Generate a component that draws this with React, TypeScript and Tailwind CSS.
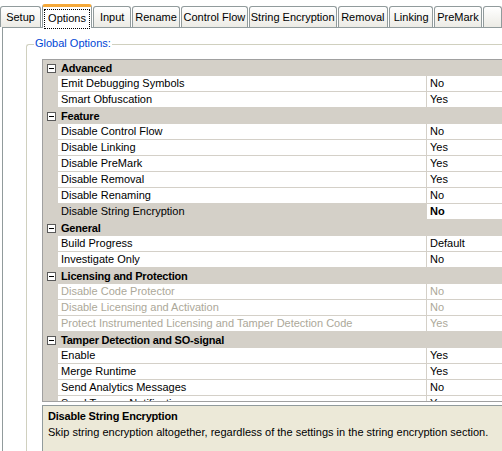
import React from 'react';

type Row =
  | { kind: 'cat'; label: string }
  | { kind: 'item'; label: string; value: string; disabled?: boolean; selected?: boolean };

const rows: Row[] = [
  { kind: 'cat', label: 'Advanced' },
  { kind: 'item', label: 'Emit Debugging Symbols', value: 'No' },
  { kind: 'item', label: 'Smart Obfuscation', value: 'Yes' },
  { kind: 'cat', label: 'Feature' },
  { kind: 'item', label: 'Disable Control Flow', value: 'No' },
  { kind: 'item', label: 'Disable Linking', value: 'Yes' },
  { kind: 'item', label: 'Disable PreMark', value: 'Yes' },
  { kind: 'item', label: 'Disable Removal', value: 'Yes' },
  { kind: 'item', label: 'Disable Renaming', value: 'No' },
  { kind: 'item', label: 'Disable String Encryption', value: 'No', selected: true },
  { kind: 'cat', label: 'General' },
  { kind: 'item', label: 'Build Progress', value: 'Default' },
  { kind: 'item', label: 'Investigate Only', value: 'No' },
  { kind: 'cat', label: 'Licensing and Protection' },
  { kind: 'item', label: 'Disable Code Protector', value: 'No', disabled: true },
  { kind: 'item', label: 'Disable Licensing and Activation', value: 'No', disabled: true },
  { kind: 'item', label: 'Protect Instrumented Licensing and Tamper Detection Code', value: 'Yes', disabled: true },
  { kind: 'cat', label: 'Tamper Detection and SO-signal' },
  { kind: 'item', label: 'Enable', value: 'Yes' },
  { kind: 'item', label: 'Merge Runtime', value: 'Yes' },
  { kind: 'item', label: 'Send Analytics Messages', value: 'No' },
  { kind: 'item', label: 'Send Tamper Notification', value: 'Yes' },
];

const tabs = [
  { label: 'Setup', w: 'w-[43px]' },
  { label: 'Options', w: 'w-[51px]', active: true },
  { label: 'Input', w: 'w-[40px]' },
  { label: 'Rename', w: 'w-[50px]' },
  { label: 'Control Flow', w: 'w-[70px]' },
  { label: 'String Encryption', w: 'w-[92px]' },
  { label: 'Removal', w: 'w-[53px]' },
  { label: 'Linking', w: 'w-[46px]' },
  { label: 'PreMark', w: 'w-[50px]' },
  { label: '', w: 'w-[20px]' },
];

function MinusBox() {
  return (
    <div className="w-[9px] h-[9px] border border-[#5a5a5a] bg-white flex items-center justify-center">
      <div className="w-[5px] h-px bg-black" />
    </div>
  );
}

export default function App() {
  return (
    <div
      className="w-[502px] h-[451px] overflow-hidden bg-white flex flex-col text-[11px] leading-none text-black"
      style={{ fontFamily: '"Liberation Sans", Arial, sans-serif' }}
    >
      {/* Tabs */}
      <div className="h-[27px] flex items-end gap-[1px] shrink-0 bg-white">
        {tabs.map((t) =>
          t.active ? (
            <div
              key={t.label}
              className={`${t.w} h-[24px] -mb-px relative z-10 bg-white border-x border-[#919b9c] rounded-t-[3px] border-t-[3px] border-t-[#f5a93a] flex items-start justify-center pt-[2px]`}
            >
              <span className="border border-dotted border-black px-[3px] pt-[3px] pb-[4px] mx-[1px] w-full text-center">
                {t.label}
              </span>
            </div>
          ) : (
            <div
              key={t.label || 'rest'}
              className={`${t.w} h-[21px] bg-gradient-to-b from-white to-[#ecebe5] border border-b-0 border-[#919b9c] rounded-t-[3px] flex items-center justify-center pt-[1px]`}
            >
              {t.label}
            </div>
          )
        )}
      </div>

      {/* Tab panel */}
      <div className="flex-1 ml-[2px] border-l border-t border-[#919b9c] bg-white flex flex-col">
        <div className="mt-[16px] ml-[23px] flex-1 border-l border-t border-[#d0d0bf] rounded-tl-[3px] relative flex flex-col">
          <span className="absolute -top-[7px] left-[7px] bg-white px-[1px] text-[#0046d5]">Global Options:</span>

          <div className="pl-[15px] pt-[14px] flex flex-col flex-1">
            {/* Property grid */}
            <div className="w-[480px] h-[343px] border border-[#a0a0a0] border-r-0 overflow-hidden bg-white">
              {rows.map((r, i) =>
                r.kind === 'cat' ? (
                  <div key={i} className="h-[16px] flex items-center bg-[#d4d0c8]">
                    <div className="w-[15px] flex justify-center pl-[1px]">
                      <MinusBox />
                    </div>
                    <span className="pl-[3px] font-bold tracking-[-0.2px]">{r.label}</span>
                  </div>
                ) : (
                  <div key={i} className="h-[16px] flex">
                    <div className="w-[15px] bg-[#d4d0c8]" />
                    <div
                      className={`w-[369px] border-b border-r border-[#d4d0c8] pl-[3px] flex items-center whitespace-nowrap overflow-hidden ${
                        r.selected ? 'bg-[#d4d0c8]' : ''
                      } ${r.disabled ? 'text-[#aca899]' : ''}`}
                    >
                      {r.label}
                    </div>
                    <div
                      className={`flex-1 border-b border-[#d4d0c8] pl-[3px] flex items-center ${
                        r.disabled ? 'text-[#aca899]' : ''
                      } ${r.selected ? 'font-bold' : ''}`}
                    >
                      {r.value}
                    </div>
                  </div>
                )
              )}
            </div>

            {/* Description */}
            <div className="mt-[3px] w-[480px] flex-1 bg-[#ece9d8] border-t border-l border-[#919b9c] pl-[5px] pt-[5px]">
              <div className="font-bold tracking-[-0.2px]">Disable String Encryption</div>
              <div className="mt-[5px] whitespace-nowrap">
                Skip string encryption altogether, regardless of the settings in the string encryption section.
              </div>
            </div>
          </div>
        </div>
      </div>
    </div>
  );
}
